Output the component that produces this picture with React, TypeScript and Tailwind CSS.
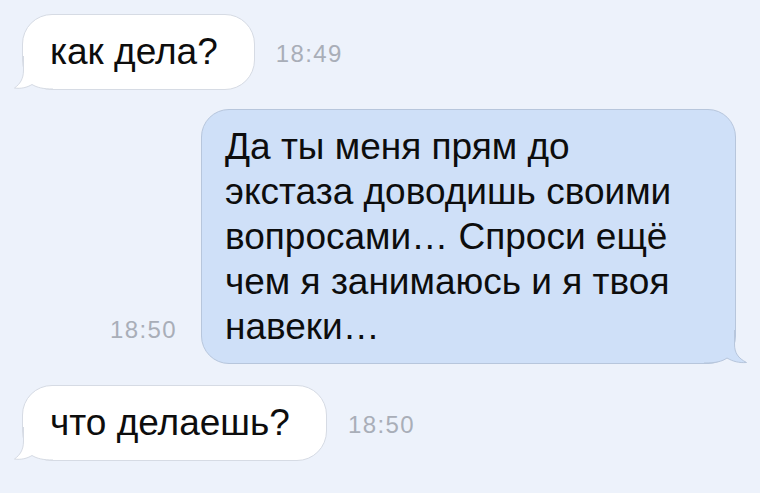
import React from "react";

const font = { fontFamily: '"Liberation Sans", Arial, sans-serif' };

function LeftTail() {
  return (
    <svg
      className="absolute left-[-10px] bottom-[-1px]"
      width="40"
      height="34"
      viewBox="0 0 40 34"
    >
      <path
        d="M10.5 0 L10.5 14 C10.5 23 7 28 1.5 32 C8 33 14 31.5 19 28.5 C24 31.5 30 33 40 33 L40 0 Z"
        fill="#ffffff"
      />
      <path
        d="M10.5 0 L10.5 14 C10.5 23 7 28 1.5 32 C8 33 14 31.5 19 28.5 C24 31.5 30 33 40 33"
        fill="none"
        stroke="#d6dbe4"
        strokeWidth="1"
      />
    </svg>
  );
}

function RightTail() {
  return (
    <svg
      className="absolute right-[-13px] bottom-[-1px]"
      width="44"
      height="34"
      viewBox="0 0 44 34"
    >
      <path
        d="M30.5 0 L30.5 14 C30.5 23 34 28 42.5 32.5 C35 33 29 31.5 23 28 C18 31.5 12 33 0 33 L0 0 Z"
        fill="#cfe0f8"
      />
      <path
        d="M30.5 0 L30.5 14 C30.5 23 34 28 42.5 32.5 C35 33 29 31.5 23 28 C18 31.5 12 33 0 33"
        fill="none"
        stroke="#b7c6dc"
        strokeWidth="1"
      />
    </svg>
  );
}

function Time({ children }: { children: React.ReactNode }) {
  return (
    <span
      className="text-[24px] leading-none tracking-[1.4px] text-[#a9aeb8]"
      style={font}
    >
      {children}
    </span>
  );
}

function Incoming({ text, time }: { text: string; time: string }) {
  return (
    <div className="flex items-end">
      <div className="relative rounded-[30px] border border-[#d6dbe4] bg-white pl-[27px] pr-[36px] py-[18px]">
        <LeftTail />
        <span className="relative text-[37px] leading-[38px] text-[#0d0d0d]" style={font}>
          {text}
        </span>
      </div>
      <div className="ml-[21px] mb-[21px]">
        <Time>{time}</Time>
      </div>
    </div>
  );
}

export default function App() {
  return (
    <div className="w-[760px] h-[493px] overflow-hidden bg-[#edf2fb]" style={font}>
      <div className="flex flex-col pt-[14px] pl-[22px]">
        <Incoming text="как дела?" time="18:49" />

        <div className="mt-[19px] flex items-end">
          <div className="w-[179px] flex justify-end pr-[24px] mb-[22px]">
            <Time>18:50</Time>
          </div>
          <div className="relative w-[535px] rounded-[28px] border border-[#b7c6dc] bg-[#cfe0f8] pl-[23px] pr-[16px] pt-[14px] pb-[14px]">
            <RightTail />
            <p className="relative text-[37px] leading-[45px] text-[#0d0d0d] whitespace-nowrap">
              Да ты меня прям до
              <br />
              экстаза доводишь своими
              <br />
              вопросами… Спроси ещё
              <br />
              чем я занимаюсь и я твоя
              <br />
              навеки…
            </p>
          </div>
        </div>

        <div className="mt-[21px]">
          <Incoming text="что делаешь?" time="18:50" />
        </div>
      </div>
    </div>
  );
}
